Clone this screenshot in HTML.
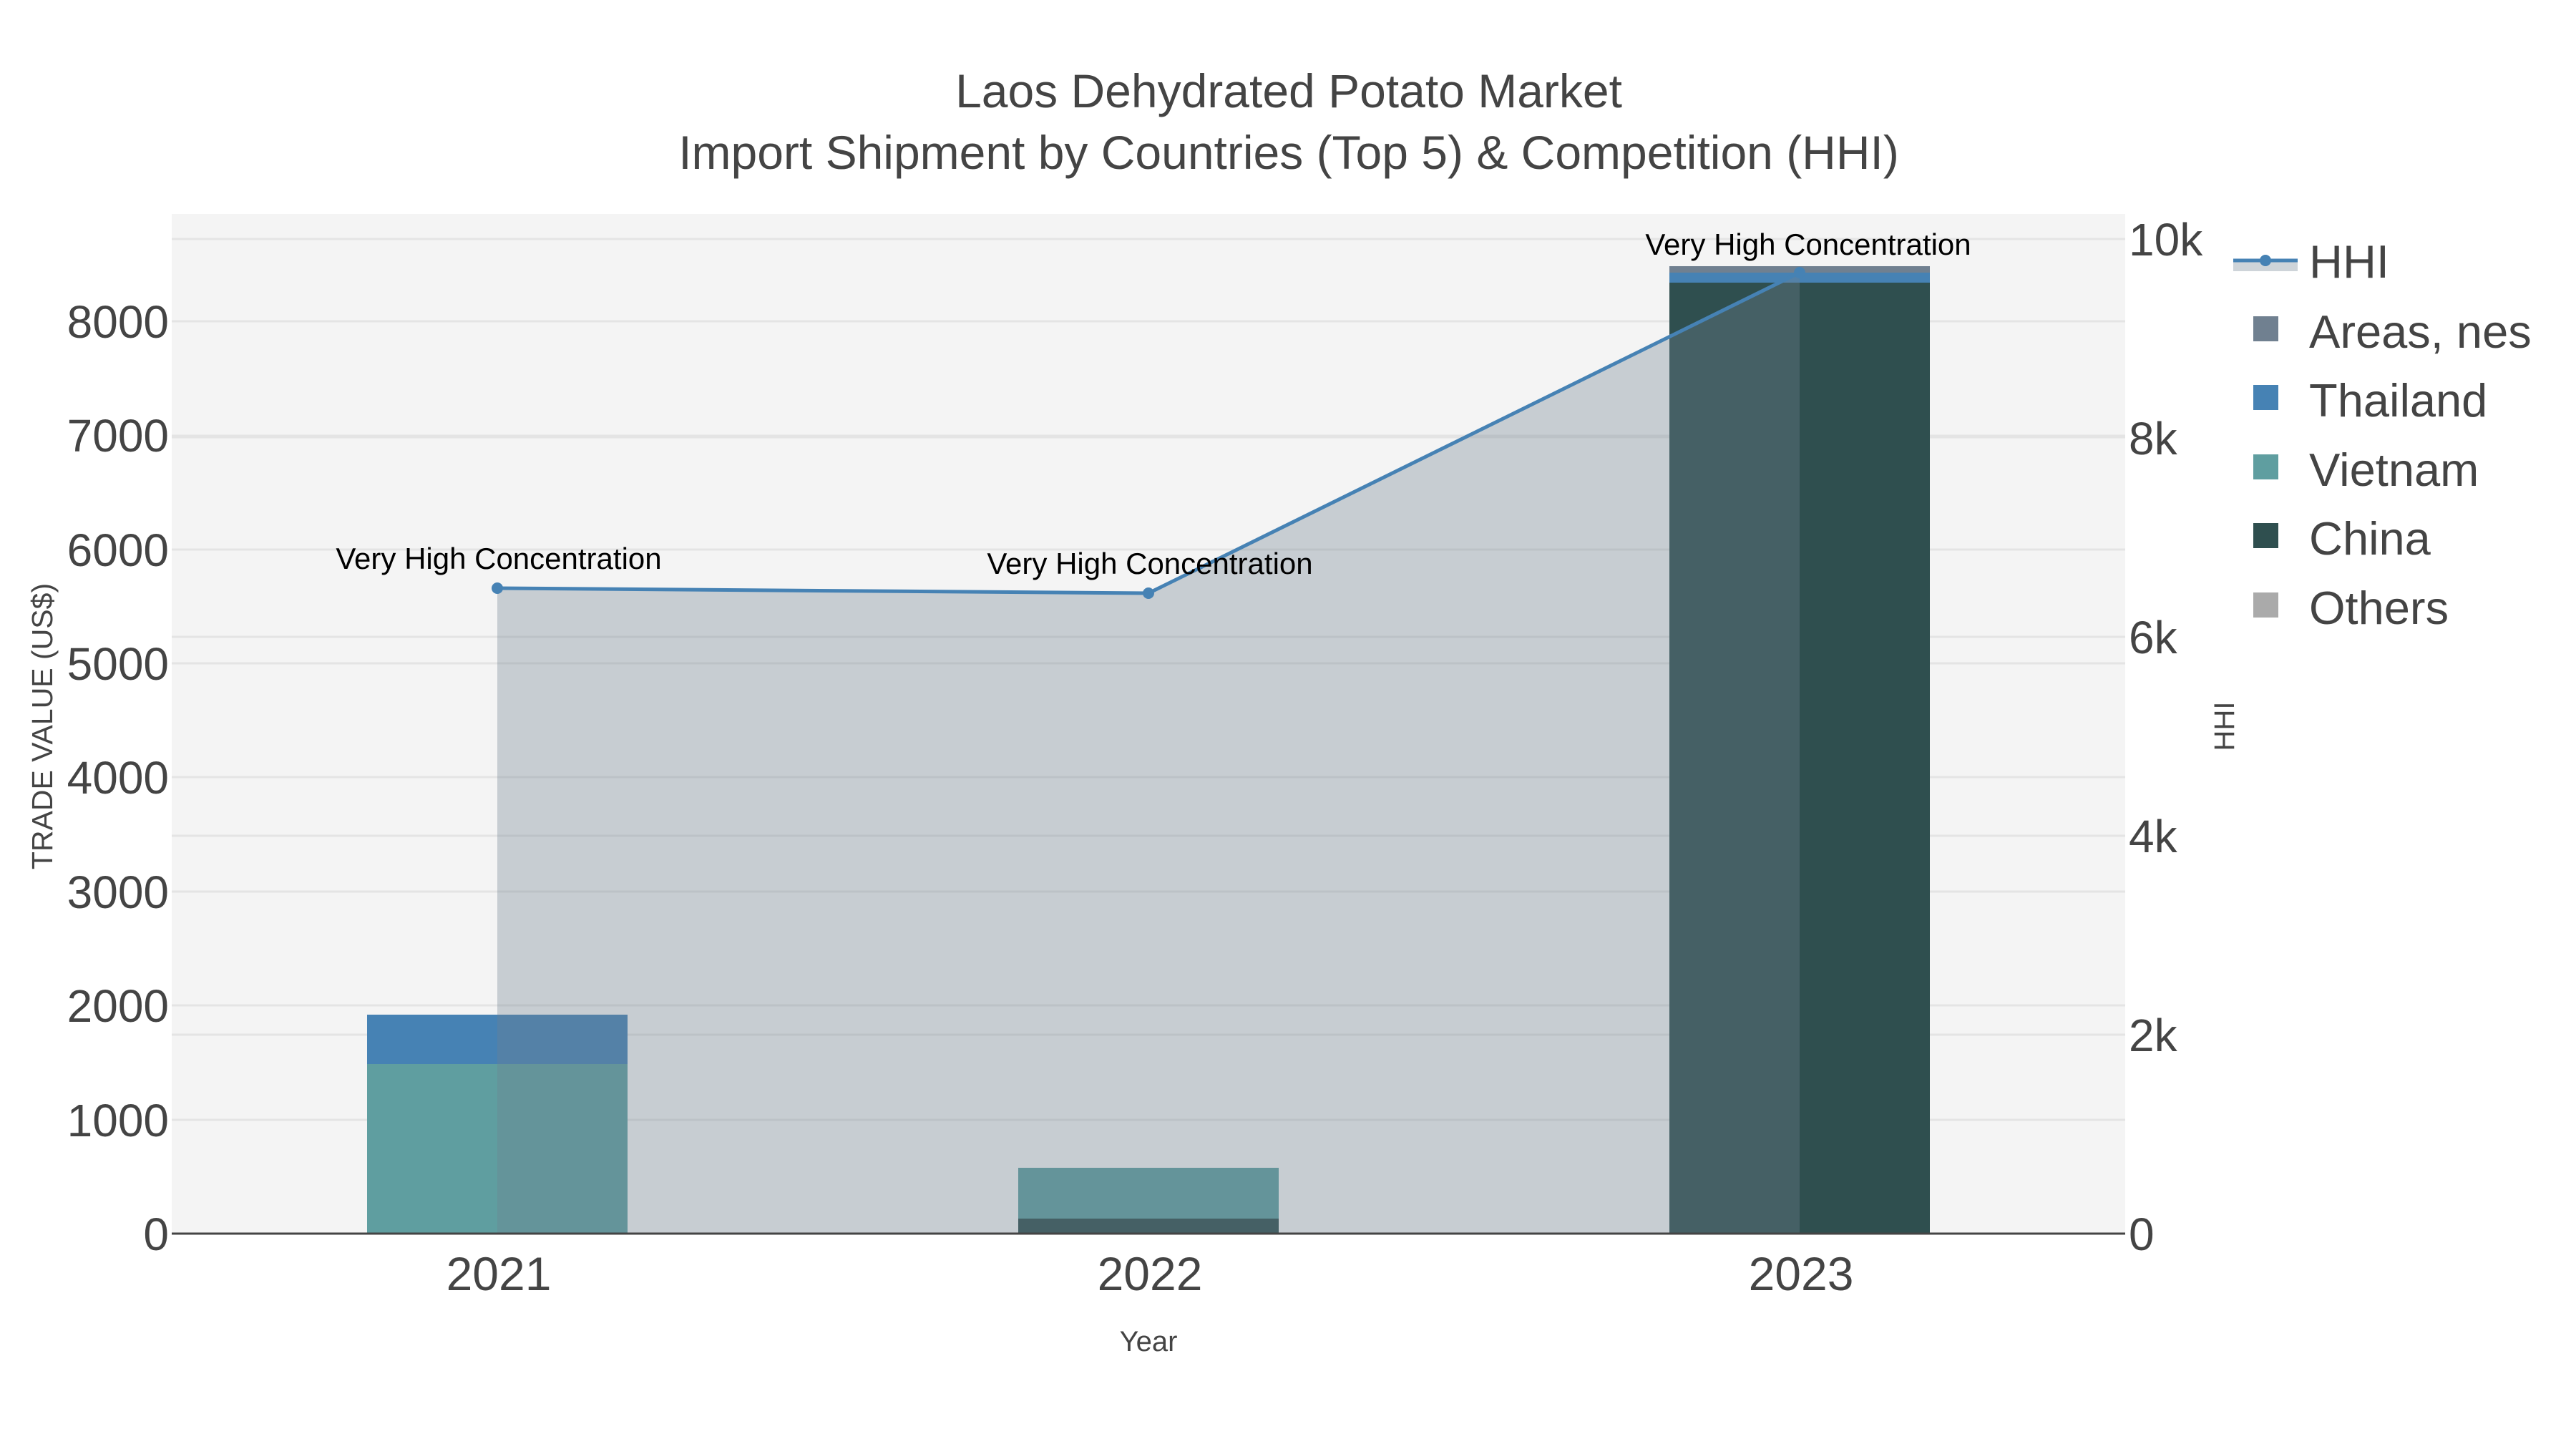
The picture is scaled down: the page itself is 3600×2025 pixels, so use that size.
<!DOCTYPE html>
<html><head><meta charset="utf-8"><style>
html,body{margin:0;padding:0;background:#fff}
svg{display:block}
text{font-family:"Liberation Sans",sans-serif}
</style></head><body>
<svg width="3600" height="2025" viewBox="0 0 3600 2025" xmlns="http://www.w3.org/2000/svg">
<rect x="0" y="0" width="3600" height="2025" fill="#fff"/>
<rect x="240" y="299" width="2730" height="1425" fill="#f4f4f4"/>
<g stroke="#e4e4e4" stroke-width="3">
<line x1="240" x2="2970" y1="1565" y2="1565"/>
<line x1="240" x2="2970" y1="1405" y2="1405"/>
<line x1="240" x2="2970" y1="1246" y2="1246"/>
<line x1="240" x2="2970" y1="1086" y2="1086"/>
<line x1="240" x2="2970" y1="927" y2="927"/>
<line x1="240" x2="2970" y1="768" y2="768"/>
<line x1="240" x2="2970" y1="610" y2="610" stroke-width="5"/>
<line x1="240" x2="2970" y1="449" y2="449"/>
<line x1="240" x2="2970" y1="1446" y2="1446"/>
<line x1="240" x2="2970" y1="1168" y2="1168"/>
<line x1="240" x2="2970" y1="890" y2="890"/>
<line x1="240" x2="2970" y1="334" y2="334"/>
</g>
<rect x="513" y="1487" width="364" height="237" fill="#5f9ea0"/>
<rect x="513" y="1418" width="364" height="69" fill="#4682b4"/>
<rect x="1423" y="1632" width="364" height="71" fill="#5f9ea0"/>
<rect x="1423" y="1703" width="364" height="21" fill="#2f4f4f"/>
<rect x="2333" y="395" width="364" height="1329" fill="#2f4f4f"/>
<rect x="2333" y="381" width="364" height="14" fill="#4682b4"/>
<rect x="2333" y="372" width="364" height="9" fill="#708090"/>
<polygon points="695,822 1605,829 2515,381 2515,1724 695,1724" fill="rgba(112,128,144,0.34)"/>
<polyline points="695,822 1605,829 2515,381" fill="none" stroke="#4682b4" stroke-width="5"/>
<circle cx="695" cy="822" r="8" fill="#4682b4"/>
<circle cx="1605" cy="829" r="8" fill="#4682b4"/>
<circle cx="2515" cy="381" r="8" fill="#4682b4"/>
<line x1="240" x2="2970" y1="1724" y2="1724" stroke="#444" stroke-width="3"/>
<g font-size="42" fill="#000" text-anchor="middle">
<text x="697" y="795">Very High Concentration</text>
<text x="1607" y="802">Very High Concentration</text>
<text x="2527" y="356">Very High Concentration</text>
</g>
<g font-size="64" fill="#444" text-anchor="end">
<text x="236" y="1747">0</text>
<text x="236" y="1588">1000</text>
<text x="236" y="1428">2000</text>
<text x="236" y="1269">3000</text>
<text x="236" y="1109">4000</text>
<text x="236" y="950">5000</text>
<text x="236" y="791">6000</text>
<text x="236" y="631">7000</text>
<text x="236" y="472">8000</text>
</g>
<g font-size="64" fill="#444">
<text x="2975" y="1747">0</text>
<text x="2975" y="1469">2k</text>
<text x="2975" y="1191">4k</text>
<text x="2975" y="913">6k</text>
<text x="2975" y="635">8k</text>
<text x="2975" y="357">10k</text>
</g>
<g font-size="66" fill="#444" text-anchor="middle">
<text x="697" y="1803">2021</text>
<text x="1607" y="1803">2022</text>
<text x="2517" y="1803">2023</text>
</g>
<text x="1605" y="1888" font-size="40" fill="#444" text-anchor="middle">Year</text>
<text transform="translate(73,1015) rotate(-90)" font-size="41" fill="#444" text-anchor="middle">TRADE VALUE (US$)</text>
<text transform="translate(3122,1015) rotate(-90)" font-size="40" fill="#444" text-anchor="middle">HHI</text>
<g font-size="66" fill="#444" text-anchor="middle">
<text x="1801" y="150">Laos Dehydrated Potato Market</text>
<text x="1801" y="236">Import Shipment by Countries (Top 5) &amp; Competition (HHI)</text>
</g>
<rect x="3121" y="365" width="90" height="14" fill="rgba(112,128,144,0.34)"/>
<line x1="3121" x2="3211" y1="364" y2="364" stroke="#4682b4" stroke-width="5"/>
<circle cx="3166" cy="364" r="8" fill="#4682b4"/>
<rect x="3149" y="442" width="35" height="35" fill="#708090"/>
<rect x="3149" y="538" width="35" height="35" fill="#4682b4"/>
<rect x="3149" y="635" width="35" height="35" fill="#5f9ea0"/>
<rect x="3149" y="731" width="35" height="35" fill="#2f4f4f"/>
<rect x="3149" y="828" width="35" height="35" fill="#aaaaaa"/>
<g font-size="65" fill="#444">
<text x="3227" y="388">HHI</text>
<text x="3227" y="486">Areas, nes</text>
<text x="3227" y="582">Thailand</text>
<text x="3227" y="679">Vietnam</text>
<text x="3227" y="775">China</text>
<text x="3227" y="872">Others</text>
</g>
</svg>
</body></html>
